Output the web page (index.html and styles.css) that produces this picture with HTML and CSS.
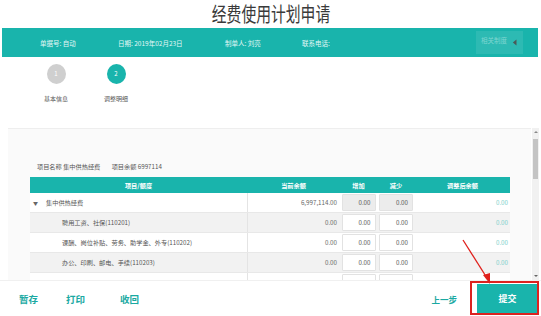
FILE: index.html
```html
<!DOCTYPE html>
<html lang="zh">
<head>
  <meta charset="UTF-8">
  <title>经费使用计划申请</title>
  <link rel="stylesheet" href="styles.css">
</head>
<body>

<div class="page">
  <h1 class="title"><span>经费使用计划申请</span></h1>

  <div class="info-bar">
    <span class="info-item w1">单据号: 自动</span>
    <span class="info-item w2">日期: 2019年02月23日</span>
    <span class="info-item w3">制单人: 刘亮</span>
    <span class="info-item w4">联系电话:</span>
    <div class="rel-btn">
      <span>相关制度</span>
      <svg width="5" height="7" viewBox="0 0 5 7"><path d="M4.5 0.5 L0.8 3.5 L4.5 6.5 Z" fill="#4a5a59"/></svg>
    </div>
  </div>

  <div class="steps">
    <div class="step">
      <div class="circle grey">1</div>
      <div class="step-label">基本信息</div>
    </div>
    <div class="step">
      <div class="circle active">2</div>
      <div class="step-label">调整明细</div>
    </div>
  </div>

  <div class="panel">
    <div class="scroll-body">
      <div class="project-line">
        <span>项目名称 集中供热经费</span>
        <span class="gap">项目余额 6997114</span>
      </div>
      <table class="detail">
        <colgroup>
          <col style="width:217px"><col style="width:93px"><col style="width:37px"><col style="width:38px"><col style="width:95px">
        </colgroup>
        <thead>
          <tr>
            <th>项目/额度</th>
            <th>当前余额</th>
            <th>增加</th>
            <th>减少</th>
            <th>调整后余额</th>
          </tr>
        </thead>
        <tbody id="detail-body">
          <!-- rows from JS -->
        </tbody>
      </table>
    </div>
    <div class="scrollbar">
      <span class="arrow up"></span>
      <div class="track"><div class="thumb"></div></div>
      <span class="arrow down"></span>
    </div>
  </div>

  <div class="footer">
    <a class="link l1">暂存</a>
    <a class="link l2">打印</a>
    <a class="link l3">收回</a>
    <a class="link prev">上一步</a>
    <button class="submit-btn">提交</button>
  </div>

  <!-- annotation over the submit button -->
  <div class="mark-box"></div>
  <svg class="mark-arrow" width="40" height="50" viewBox="0 0 40 50">
    <line x1="2" y1="2" x2="26" y2="40" stroke="#e0201c" stroke-width="1.3"/>
    <path d="M22 37 L29 46 L29 35 Z" fill="#e0201c"/>
  </svg>
</div>

<script>
  const rows = [
    { name: "集中供热经费", cur: "6,997,114.00", top: true },
    { name: "聘用工资、社保(110201)", cur: "0.00" },
    { name: "课酬、岗位补贴、劳务、助学金、外专(110202)", cur: "0.00" },
    { name: "办公、印刷、邮电、手续(110203)", cur: "0.00" }
  ];

  const body = document.getElementById("detail-body");
  rows.forEach(item => {
    const tr = document.createElement("tr");
    if (item.top) tr.className = "top-row";
    const label = item.top
      ? `<span class="caret">▼</span>${item.name}`
      : `<span class="child">${item.name}</span>`;
    tr.innerHTML = `
      <td class="name">${label}</td>
      <td class="cur">${item.cur}</td>
      <td><div class="num-input">0.00</div></td>
      <td><div class="num-input">0.00</div></td>
      <td class="after">0.00</td>
    `;
    body.appendChild(tr);
  });

  // next row is scrolled out of view, only its boxes peek in
  const more = document.createElement("tr");
  more.innerHTML = `
    <td class="name"></td><td class="cur"></td>
    <td><div class="num-input"></div></td>
    <td><div class="num-input"></div></td>
    <td class="after"></td>
  `;
  body.appendChild(more);
</script>

</body>
</html>
```

FILE: styles.css
```css
body {
  margin: 0;
  font-family: "Noto Sans CJK SC", "Noto Sans", sans-serif;
  color: #333;
  background: #fff;
}
.page {
  position: relative;
  width: 541px;
  height: 316px;
  overflow: hidden;
}
.title {
  margin: 0;
  height: 28px;
  line-height: 28px;
  text-align: center;
  font-size: 20px;
  font-weight: 400;
  color: #3a3a3a;
}
.title span {
  display: inline-block;
  transform: scaleX(0.74);
}

/* teal info bar */
.info-bar {
  display: flex;
  align-items: center;
  height: 29px;
  margin: 0 3px 0 2px;
  padding-left: 38px;
  background-color: #19b4ac;
  color: #e3f8f6;
  font-size: 6.5px;
}
.info-item.w1 { width: 78px; }
.info-item.w2 { width: 107px; }
.info-item.w3 { width: 77px; }
.info-item.w4 { flex: 1; }
.rel-btn {
  display: flex;
  align-items: center;
  gap: 5px;
  width: 47px;
  height: 23px;
  margin-right: 15px;
  padding-left: 5px;
  box-sizing: border-box;
  background-color: #2dbab3;
  color: #7fd6d1;
  font-size: 6.5px;
}
.rel-btn span { margin-top: -6px; }

/* steps */
.steps {
  display: flex;
  gap: 20px;
  height: 71px;
  padding-left: 36px;
  box-sizing: border-box;
}
.step {
  width: 40px;
  display: flex;
  flex-direction: column;
  align-items: center;
  padding-top: 7px;
}
.circle {
  width: 19px;
  height: 20px;
  border-radius: 50%;
  color: #fff;
  font-size: 6px;
  line-height: 20px;
  text-align: center;
}
.circle.grey { background-color: #cfcfcf; }
.circle.active { background-color: #19b4ac; }
.step-label {
  margin-top: 10px;
  font-size: 6px;
  color: #555;
}

/* detail panel */
.panel {
  display: flex;
  height: 152px;
}
.scroll-body {
  flex: 1;
  margin-left: 8px;
  overflow: hidden;
  background-color: #fafafa;
  border-top: 1px solid #eeeeee;
}
.project-line {
  height: 10px;
  margin: 33px 0 5px 29px;
  font-size: 6.2px;
  line-height: 10px;
  color: #555;
}
.project-line .gap { margin-left: 10px; }

table.detail {
  margin-left: 22px;
  width: 480px;
  table-layout: fixed;
  border-collapse: collapse;
  font-size: 6.2px;
  color: #555;
}
.detail th {
  height: 16px;
  padding: 0;
  background-color: #19b4ac;
  color: #fff;
  font-weight: bold;
  text-align: center;
}
.detail td {
  height: 19px;
  padding: 0;
  background-color: #f2f2f2;
  border-bottom: 1px solid #e8e8e8;
}
.detail tr.top-row td,
.detail tbody tr:nth-child(3) td,
.detail tbody tr:nth-child(5) td {
  background-color: #fff;
}
.detail td.name {
  padding-left: 3px;
  border-right: 1px solid #e4e4e4;
}
.caret {
  font-size: 5px;
  margin-right: 8px;
  color: #666;
}
.child { padding-left: 29px; }
.detail td.cur {
  text-align: right;
  padding-right: 3px;
  color: #666;
}
.num-input {
  width: 34px;
  height: 17px;
  margin: 0 auto;
  box-sizing: border-box;
  padding-right: 4px;
  border: 1px solid #e2e2e2;
  border-radius: 1px;
  background-color: #fff;
  line-height: 15px;
  text-align: right;
  color: #555;
}
.top-row .num-input { background-color: #ececec; }
.detail td.after {
  text-align: right;
  padding-right: 2px;
  color: #7ccfcb;
}

/* fake scrollbar */
.scrollbar {
  width: 7px;
  margin: 0 2px 0 1px;
  display: flex;
  flex-direction: column;
  align-items: center;
  background-color: #f1f1f1;
}
.scrollbar .track {
  flex: 1;
  width: 100%;
}
.scrollbar .thumb {
  margin: 3px 1px 0;
  height: 40px;
  background-color: #c4c4c4;
}
.arrow {
  width: 0;
  height: 0;
  border-left: 2px solid transparent;
  border-right: 2px solid transparent;
  margin: 3px 0;
}
.arrow.up { border-bottom: 2px solid #888; }
.arrow.down { border-top: 2px solid #666; }

/* footer actions */
.footer {
  display: flex;
  align-items: center;
  height: 36px;
  border-top: 1px solid #f0f0f0;
  box-sizing: border-box;
  font-size: 9.5px;
  font-weight: bold;
}
.link { color: #1aa9a2; }
.l1 { margin-left: 19px; }
.l2 { margin-left: 28px; }
.l3 { margin-left: 35px; }
.prev { margin-left: auto; margin-right: 20px; font-size: 8.5px; }
.submit-btn {
  width: 61px;
  height: 30px;
  margin-right: 3px;
  border: none;
  background-color: #19b4ac;
  color: #fff;
  font-family: inherit;
  font-size: 9px;
  font-weight: bold;
}

/* red annotation */
.mark-box {
  position: absolute;
  left: 470px;
  top: 281px;
  width: 69px;
  height: 34px;
  box-sizing: border-box;
  border: 2px solid #dc2320;
}
.mark-arrow {
  position: absolute;
  left: 461px;
  top: 238px;
}
```
